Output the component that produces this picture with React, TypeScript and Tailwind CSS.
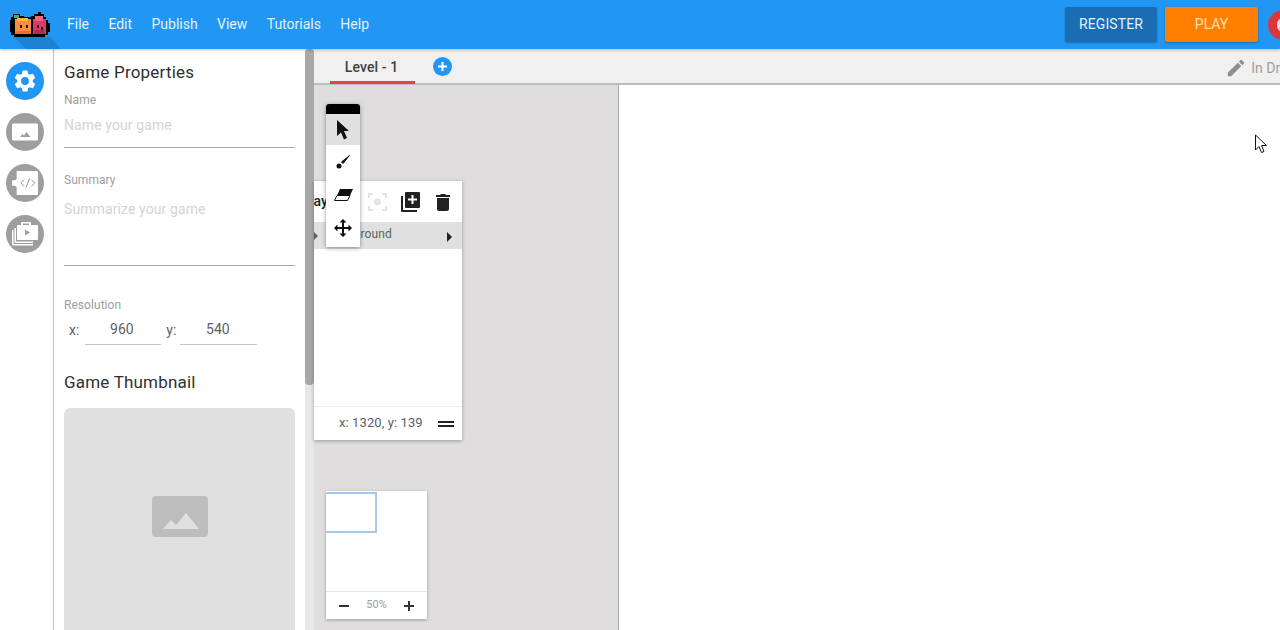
import React from "react";

const Logo = () => (
  <svg width="40" height="26" viewBox="0 0 40 26" shapeRendering="crispEdges" className="block overflow-visible">
    <path d="M4 25L17 38H52L40 25z" fill="#000" opacity="0.13" shapeRendering="auto" />
    <path fill="#000" d="M3 2h7v2h4v1h7V4h3V2h4V0h3v2h3v3h2v3h2v3h2v9h-2v3h-3v2H4v-2H1v-3H0V8h1V5h2z" />
    <rect x="4" y="2.500" width="5" height="3.500" fill="#4caf50" />
    <rect x="5" y="7" width="16" height="15" fill="#fa8f3e" />
    <rect x="7" y="6" width="11" height="3" fill="#ffb24d" />
    <rect x="5" y="19" width="16" height="3" fill="#ee6f30" />
    <rect x="10" y="13" width="2" height="3" fill="#2a1408" />
    <rect x="16" y="13" width="2" height="3" fill="#2a1408" />
    <rect x="23" y="7" width="13" height="15" fill="#d93a66" />
    <rect x="25" y="4" width="8" height="5" fill="#ec6a82" />
    <rect x="24" y="18" width="11" height="4" fill="#b52a55" />
    <rect x="27" y="13" width="2" height="3" fill="#2a0a18" />
    <rect x="31" y="15" width="2" height="3" fill="#2a0a18" />
  </svg>
);

const Rail = ({ active, children }: { active?: boolean; children: React.ReactNode }) => (
  <div className={`w-[38px] h-[38px] rounded-full flex items-center justify-center ${active ? "bg-[#2196f3]" : "bg-[#9e9e9e]"}`}>
    {children}
  </div>
);

const Label = ({ children }: { children: React.ReactNode }) => (
  <div className="text-[12px] leading-[14px] text-[#9e9e9e] tracking-[0.05px]">{children}</div>
);

export default function App() {
  return (
    <div className="relative w-[1280px] h-[630px] overflow-hidden bg-white font-['Roboto',sans-serif] flex flex-col">
      <header className="relative z-20 h-[49px] shrink-0 bg-[#2196f3] shadow-[0_1px_3px_rgba(0,0,0,0.25)] flex items-center overflow-hidden">
        <div className="ml-[10px] w-[40px] shrink-0">
          <Logo />
        </div>
        <nav className="flex ml-[17px] gap-[19.4px] text-[14px] text-[#e3f2fd]">
          <span>File</span>
          <span>Edit</span>
          <span>Publish</span>
          <span>View</span>
          <span>Tutorials</span>
          <span>Help</span>
        </nav>
        <div className="ml-auto flex items-center gap-[8px] -mr-[18px]">
          <button className="w-[92px] h-[35px] rounded-[2px] bg-[#1a6cb3] text-[#e3f2fd] text-[14px] tracking-[0.1px] shadow-[0_1px_2px_rgba(0,0,0,0.25)]">REGISTER</button>
          <button className="w-[93px] h-[35px] rounded-[2px] bg-[#ff8000] text-[#ffe0b2] text-[14px] shadow-[0_1px_2px_rgba(0,0,0,0.3)]">PLAY</button>
          <div className="ml-[2px] w-[30px] h-[30px] rounded-full bg-[#d9373c] flex items-center justify-center">
            <div className="w-[12px] h-[14px] rounded-full bg-[#f5d5d5]" />
          </div>
        </div>
      </header>

      <div className="flex flex-1 min-h-0">
        <aside className="w-[54px] shrink-0 border-r border-[#c4c4c4] flex flex-col items-center gap-[13px] pt-[13px] pr-[3px]">
          <Rail active>
            <svg width="26" height="26" viewBox="0 0 24 24" fill="#fff">
              <path d="M19.14 12.94c.04-.3.06-.61.06-.94 0-.32-.02-.64-.07-.94l2.03-1.58a.49.49 0 0 0 .12-.61l-1.92-3.32a.49.49 0 0 0-.59-.22l-2.39.96a7 7 0 0 0-1.62-.94l-.36-2.54a.48.48 0 0 0-.48-.41h-3.84a.47.47 0 0 0-.47.41l-.36 2.54a7.4 7.4 0 0 0-1.62.94l-2.39-.96a.48.48 0 0 0-.59.22L2.74 8.87a.47.47 0 0 0 .12.61l2.03 1.58c-.05.3-.09.63-.09.94s.02.64.07.94l-2.03 1.58a.49.49 0 0 0-.12.61l1.92 3.32c.12.22.37.29.59.22l2.39-.96c.5.38 1.03.7 1.62.94l.36 2.54c.05.24.24.41.48.41h3.84c.24 0 .44-.17.47-.41l.36-2.54a7 7 0 0 0 1.62-.94l2.39.96c.22.08.47 0 .59-.22l1.92-3.32a.47.47 0 0 0-.12-.61zM12 15.6A3.6 3.6 0 1 1 12 8.4a3.6 3.6 0 0 1 0 7.2z" />
            </svg>
          </Rail>
          <Rail>
            <svg width="26" height="26" viewBox="0 0 26 26">
              <rect x="0" y="4.500" width="26" height="17" rx="1.500" fill="#fff" />
              <path d="M8 18l2.500-3 1.500 1.500L14.500 13l4 5z" fill="#9e9e9e" />
            </svg>
          </Rail>
          <Rail>
            <svg width="28" height="24" viewBox="0 0 30 26">
              <path d="M6 0H28a1 1 0 0 1 1 1V25a1 1 0 0 1-1 1H6V18a3 3 0 0 0-3-2H1V10h2a3 3 0 0 0 3-2z" fill="#fff" />
              <path d="M14 9.500l-3.500 3.500 3.500 3.500M22 9.500l3.500 3.500-3.500 3.500M20 8l-4 10" fill="none" stroke="#8a8a8a" strokeWidth="1" />
            </svg>
          </Rail>
          <Rail>
            <svg width="28" height="28" viewBox="0 0 28 28" fill="#fff">
              <path d="M1 10h1.500v14H22v1.500H2a1 1 0 0 1-1-1z" />
              <path d="M3.500 8H5v13.500h17V23H4.500a1 1 0 0 1-1-1z" />
              <path d="M11 2h8a1 1 0 0 1 1 1v2h6a1 1 0 0 1 1 1v13a1 1 0 0 1-1 1H7a1 1 0 0 1-1-1V6a1 1 0 0 1 1-1h3V3a1 1 0 0 1 1-1zm1 1.500V5h6V3.500z" fillRule="evenodd" />
              <path d="M14 9.500v6l5-3z" fill="#9e9e9e" />
            </svg>
          </Rail>
        </aside>

        <section className="w-[251px] shrink-0 overflow-hidden pl-[10px] pr-[10px] pt-[13px]">
          <h2 className="text-[17px] leading-[20px] font-normal text-[#303030] tracking-[0.2px]">Game Properties</h2>
          <div className="mt-[11px]"><Label>Name</Label></div>
          <div className="mt-[9px] text-[14px] tracking-[0.1px] leading-[18px] text-[#d4d4d4] h-[31px] border-b border-[#a8a8a8] box-content">Name your game</div>
          <div className="mt-[25px]"><Label>Summary</Label></div>
          <div className="mt-[13px] text-[14px] tracking-[0.1px] leading-[18px] text-[#d4d4d4] h-[66px] border-b border-[#a8a8a8]">Summarize your game</div>
          <div className="mt-[32px]"><Label>Resolution</Label></div>
          <div className="mt-[8px] flex items-start text-[14px] leading-[19px] text-[#616161] pl-[5px]">
            <span className="mt-[1px]">x:</span>
            <div className="ml-[6px] w-[76px] h-[25px] pr-[3px] text-center border-b border-[#c4c4c4]">960</div>
            <span className="ml-[5px] mt-[1px]">y:</span>
            <div className="ml-[4px] w-[77px] h-[25px] pr-[2px] text-center border-b border-[#c4c4c4]">540</div>
          </div>
          <h2 className="mt-[27px] text-[17px] leading-[20px] font-normal text-[#303030] tracking-[0.2px]">Game Thumbnail</h2>
          <div className="mt-[16px] h-[300px] rounded-[6px] bg-[#e0e0e0] flex flex-col items-center pt-[88px]">
            <svg width="56" height="41" viewBox="0 0 56 41">
              <rect width="56" height="41" rx="4" fill="#bdbdbd" />
              <path d="M11 33l8-9 5 5 10-12 13 16z" fill="#e0e0e0" />
            </svg>
          </div>
        </section>

        <div className="w-[9px] shrink-0 bg-[#e8e8e8] flex flex-col">
          <div className="h-[336px] rounded-[4px] bg-[#a8a8a8]" />
        </div>

        <main className="relative flex-1 min-w-0 flex flex-col">
          <div className="h-[36px] shrink-0 bg-[#f0f0f0] border-b-2 border-[#bdbdbd] flex items-start relative">
            <div className="w-[85px] ml-[16px] h-[35px] pt-[4px] pr-[2px] flex items-center justify-center text-[14px] font-medium tracking-[0.1px] text-[#424242] border-b-[3px] border-[#e0453f]">Level - 1</div>
            <div className="ml-[18px] mt-[8px] w-[19px] h-[19px] rounded-full bg-[#2196f3] flex items-center justify-center">
              <svg width="11" height="11" viewBox="0 0 11 11"><path d="M4.500 1h2v3.500H10v2H6.500V10h-2V6.500H1v-2h3.500z" fill="#fff" /></svg>
            </div>
            <div className="ml-auto mt-[8px] flex items-center whitespace-nowrap -mr-[17px] text-[14px] text-[#9e9e9e]">
              <svg width="22" height="22" viewBox="0 0 24 24" fill="#8f8f8f"><path d="M3 17.250V21h3.750L17.810 9.940l-3.750-3.750zM20.710 7.040a1 1 0 0 0 0-1.410l-2.340-2.340a1 1 0 0 0-1.410 0l-1.830 1.830 3.750 3.750z" /></svg>
              <span className="ml-[4px]">In Draft</span>
            </div>
          </div>
          <div className="flex-1 flex min-h-0">
            <div className="w-[304px] bg-[#dfdddd] border-r border-[#a8a8a8] box-content shrink-0" />
            <div className="flex-1 bg-white" />
          </div>

          <div className="absolute left-0 top-[132px] w-[148px] h-[259px] bg-white shadow-[0_1px_4px_rgba(0,0,0,0.3)] flex flex-col overflow-hidden">
            <div className="h-[41px] shrink-0 flex items-center relative">
              <span className="text-[14px] font-medium text-[#212121] -ml-[8px]">Lay</span>
              <svg className="absolute left-[53px] top-[11px]" width="21" height="20" viewBox="0 0 21 20" fill="none" stroke="#e4e4e4" strokeWidth="2">
                <path d="M2 6V2h4M15 2h4v4M19 14v4h-4M6 18H2v-4" />
                <circle cx="10.500" cy="10" r="3.500" fill="#e4e4e4" stroke="none" />
              </svg>
              <svg className="absolute left-[86px] top-[10px]" width="21" height="22" viewBox="0 0 21 22">
                <path d="M1 5h2v14h14v2H2a1 1 0 0 1-1-1z" fill="#212121" />
                <path d="M6 1h13a1 1 0 0 1 1 1v14a1 1 0 0 1-1 1H6a1 1 0 0 1-1-1V2a1 1 0 0 1 1-1zm5.500 3v3.500H8v2h3.500V13h2V9.500H17v-2h-3.500V4z" fill="#212121" fillRule="evenodd" />
              </svg>
              <svg className="absolute left-[122px] top-[12px]" width="14" height="18" viewBox="0 0 14 18" fill="#212121">
                <path d="M1 5h12v11a2 2 0 0 1-2 2H3a2 2 0 0 1-2-2zM0 2h4l1-1h4l1 1h4v2H0z" />
              </svg>
            </div>
            <div className="h-[27px] shrink-0 bg-[#e0e0e0] flex items-center text-[12px] text-[#616161] relative">
              <div className="w-0 h-0 border-y-[4px] border-y-transparent border-l-[4px] border-l-[#616161]" />
              <span className="ml-[9px] -mt-[3px] tracking-[0.1px]">Background</span>
              <div className="ml-auto mr-[10px] mt-[3px] w-0 h-0 border-y-[5px] border-y-transparent border-l-[5px] border-l-[#212121]" />
            </div>
            <div className="flex-1" />
            <div className="h-[34px] shrink-0 border-t border-[#eeeeee] flex items-center pl-[25px] text-[13px] tracking-[0.1px] text-[#616161]">
              <span className="-mt-[2px]">x: 1320, y: 139</span>
              <div className="ml-auto mr-[8px] w-[16px] h-[6px] border-y-2 border-[#212121]" />
            </div>
          </div>

          <div className="absolute left-[12px] top-[55px] w-[34px] h-[143px] bg-white rounded-t-[3px] shadow-[0_1px_4px_rgba(0,0,0,0.4)] flex flex-col items-center">
            <div className="w-full h-[10px] shrink-0 bg-black rounded-t-[3px]" />
            <div className="w-full h-[31px] shrink-0 bg-[#e0e0e0] flex items-center justify-center">
              <svg width="14" height="20" viewBox="0 0 14 20"><path d="M1 0l12 11H8l3 7-3 1.500L5 12.500 1 16z" fill="#111" /></svg>
            </div>
            <div className="w-full h-[34px] shrink-0 flex items-center justify-center">
              <svg width="14" height="14" viewBox="0 0 14 14"><path d="M13.500.500L5.500 7l1.500 1.500z" fill="#111" stroke="#111" strokeWidth="1" /><circle cx="3" cy="11" r="2.500" fill="#111" /></svg>
            </div>
            <div className="w-full h-[32px] shrink-0 flex items-center justify-center">
              <svg width="20" height="14" viewBox="0 0 20 14"><path d="M4 7.500h13l-2.500 5H1.500z" fill="#fff" stroke="#111" strokeWidth="1" /><path d="M7 1h13l-3 6.500H4z" fill="#111" /></svg>
            </div>
            <div className="w-full h-[33px] shrink-0 flex items-center justify-center">
              <svg width="18" height="18" viewBox="0 0 18 18" fill="#111"><path d="M9 0l3.500 3.500H10V8h4.500V5.500L18 9l-3.500 3.500V10H10v4.500h2.500L9 18l-3.500-3.500H8V10H3.500v2.500L0 9l3.500-3.500V8H8V3.500H5.500z" /></svg>
            </div>
          </div>

          <div className="absolute left-[12px] top-[442px] w-[101px] h-[128px] bg-white shadow-[0_1px_3px_rgba(0,0,0,0.3)] flex flex-col">
            <div className="h-[100px] shrink-0">
              <div className="w-[51px] h-[41px] mt-[1px] border-2 border-l-0 border-[#a5c8ea]" />
            </div>
            <div className="flex-1 border-t border-[#e6e6e6] flex items-center justify-between px-[13px]">
              <div className="w-[10px] h-[2px] bg-[#333]" />
              <span className="text-[11px] text-[#9e9e9e]">50%</span>
              <svg width="10" height="10" viewBox="0 0 10 10"><path d="M4 0h2v4h4v2H6v4H4V6H0V4h4z" fill="#333" /></svg>
            </div>
          </div>
        </main>
      </div>

      <svg className="absolute left-[1254px] top-[134px] z-30" width="14" height="21" viewBox="0 0 14 21">
        <path d="M1.500 1v15l3.500-3.500 2.500 6 2.500-1-2.500-6h5z" fill="#fff" stroke="#111" strokeWidth="1" />
      </svg>
    </div>
  );
}
